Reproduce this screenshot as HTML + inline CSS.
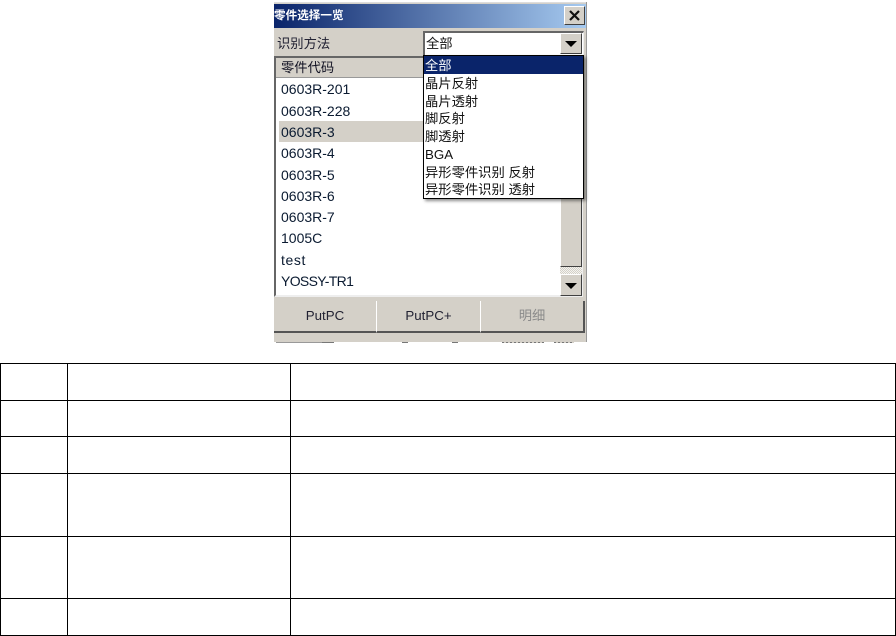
<!DOCTYPE html>
<html><head><meta charset="utf-8"><style>
html,body{margin:0;padding:0;background:#fff}
#r{position:relative;width:896px;height:636px;overflow:hidden;background:#fff;font-family:"Liberation Sans","Noto Sans CJK SC",sans-serif;color:#111}
#r div{position:absolute;box-sizing:border-box}
.t{font-size:13.3px;line-height:18px;white-space:nowrap}
.l{font-size:14px;line-height:20px;white-space:nowrap;left:281px;color:#0a1a30}
.btn{background:#d4d0c8;border-top:1px solid #eee;border-left:1px solid #fff;border-right:1px solid #404040;border-bottom:1px solid #404040}
.h{background:#000}
.v{background:#000}
.b{top:301px;height:32px;background:#d4d0c8;border-right:1px solid #fff;border-bottom:2px solid #555;text-align:center;font-size:13.3px;line-height:30px;color:#223}
.tri{width:0;height:0;border-left:6px solid transparent;border-right:6px solid transparent;border-top:6px solid #000}
.s{top:342px;height:1px;background:#777}
</style></head><body><div id="r">
<div style="left:274px;top:2px;width:313px;height:340px;background:#d4d0c8;overflow:hidden">
<div style="left:0;top:0;width:313px;height:1px;background:#ddd"></div>
<div style="left:312px;top:0;width:1px;height:340px;background:#999"></div>
<div style="left:0;top:2px;width:312px;height:24px;background:linear-gradient(90deg,#0a246a,#a6caf0)"></div>
<div style="left:0;top:4px;width:80px;font-size:11.6px;font-weight:bold;color:#fff;line-height:20px;white-space:nowrap">零件选择一览</div>
</div>
<div class="s" style="left:276px;width:50px;background:#999"></div>
<div class="s" style="left:322px;width:12px"></div>
<div class="s" style="left:402px;width:6px"></div>
<div class="s" style="left:452px;width:6px"></div>
<div class="s" style="left:502px;width:42px;background:repeating-linear-gradient(90deg,#777 0 2px,#d4d0c8 2px 4px)"></div>
<div class="s" style="left:554px;width:20px;background:repeating-linear-gradient(90deg,#777 0 2px,#d4d0c8 2px 4px)"></div>
<div class="btn" style="left:564px;top:6px;width:21px;height:19px;border-top-color:#fff"><svg style="position:absolute;left:3px;top:2px" width="14" height="13"><path d="M2 2L11 11M11 2L2 11" stroke="#111" stroke-width="2.2" fill="none"/></svg></div>
<div class="t" style="left:277px;top:35px;color:#223">识别方法</div>
<div style="left:423px;top:31px;width:161px;height:24px;background:#fff;border-top:2px solid #666;border-left:2px solid #666;border-right:1px solid #eee"></div>
<div class="t" style="left:426px;top:35px">全部</div>
<div class="btn" style="left:560px;top:33px;width:22px;height:21px;border-top-color:#fff"><div class="tri" style="left:4px;top:7px"></div></div>
<div style="left:274px;top:56px;width:309px;height:241px;background:#fff;border-top:2px solid #666;border-left:2px solid #666;border-right:1px solid #eee;border-bottom:2px solid #eee"></div>
<div style="left:276px;top:58px;width:147px;height:20px;background:#d4d0c8;border-bottom:1px solid #999"></div>
<div class="t" style="left:281px;top:59px;color:#112">零件代码</div>
<div style="left:279px;top:121px;width:150px;height:21px;background:#d4d0c8"></div>
<div class="l" style="top:79px">0603R-201</div>
<div class="l" style="top:101px">0603R-228</div>
<div class="l" style="top:122px">0603R-3</div>
<div class="l" style="top:143px">0603R-4</div>
<div class="l" style="top:165px">0603R-5</div>
<div class="l" style="top:186px">0603R-6</div>
<div class="l" style="top:207px">0603R-7</div>
<div class="l" style="top:228px">1005C</div>
<div class="l" style="top:250px;letter-spacing:.6px">test</div>
<div class="l" style="top:271px;letter-spacing:-.65px">YOSSY-TR1</div>
<div class="btn" style="left:560px;top:150px;width:22px;height:117px;border-top:0"></div>
<div style="left:560px;top:267px;width:22px;height:7px;background:repeating-conic-gradient(#d4d0c8 0 25%,#f4f4f0 0 50%) 0 0/2px 2px"></div>
<div class="btn" style="left:560px;top:274px;width:22px;height:22px;border-top-color:#fff"><div class="tri" style="left:4px;top:8px"></div></div>
<div style="left:423px;top:55px;width:161px;height:144px;background:#fff;border:1px solid #000;box-shadow:2px 2px 3px rgba(0,0,0,.45)"></div>
<div style="left:424px;top:56px;width:159px;height:18px;background:#0a246a"></div>
<div class="t" style="left:425px;top:57px;color:#fff">全部</div>
<div class="t" style="left:425px;top:75px">晶片反射</div>
<div class="t" style="left:425px;top:93px">晶片透射</div>
<div class="t" style="left:425px;top:110px">脚反射</div>
<div class="t" style="left:425px;top:128px">脚透射</div>
<div class="t" style="left:425px;top:146px">BGA</div>
<div class="t" style="left:425px;top:164px">异形零件识别 反射</div>
<div class="t" style="left:425px;top:181px">异形零件识别 透射</div>
<div class="b" style="left:274px;width:103px">PutPC</div>
<div class="b" style="left:377px;width:104px">PutPC+</div>
<div class="b" style="left:481px;width:104px;border-right:2px solid #555;color:#8a8a8a;font-size:13.3px">明细</div>
<div class="h" style="left:0;top:363px;width:896px;height:1px"></div>
<div class="h" style="left:0;top:400px;width:896px;height:1px"></div>
<div class="h" style="left:0;top:436px;width:896px;height:1px"></div>
<div class="h" style="left:0;top:473px;width:896px;height:1px"></div>
<div class="h" style="left:0;top:536px;width:896px;height:1px"></div>
<div class="h" style="left:0;top:598px;width:896px;height:1px"></div>
<div class="h" style="left:0;top:635px;width:896px;height:1px"></div>
<div class="v" style="left:0;top:363px;width:1px;height:273px"></div>
<div class="v" style="left:67px;top:363px;width:1px;height:273px"></div>
<div class="v" style="left:290px;top:363px;width:1px;height:273px"></div>
<div class="v" style="left:895px;top:363px;width:1px;height:273px"></div>
</div></body></html>
